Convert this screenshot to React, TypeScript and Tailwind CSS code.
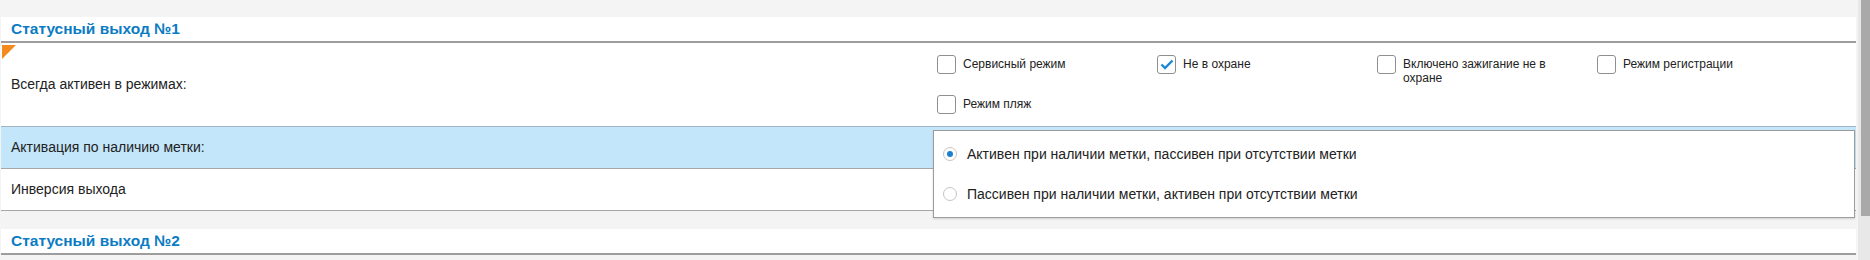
import { useState } from "react";

const MODES = [
  { id: "service", label: "Сервисный режим", checked: false },
  { id: "unguarded", label: "Не в охране", checked: true },
  { id: "ignition", label: "Включено зажигание не в охране", checked: false },
  { id: "registration", label: "Режим регистрации", checked: false },
  { id: "beach", label: "Режим пляж", checked: false },
];

const TAG_OPTIONS = [
  "Активен при наличии метки, пассивен при отсутствии метки",
  "Пассивен при наличии метки, активен при отсутствии метки",
];

function Checkbox({ checked }: { checked: boolean }) {
  return (
    <span className="flex h-[19px] w-[19px] shrink-0 items-center justify-center rounded-[3px] border border-[#8f8f8f] bg-white">
      {checked && (
        <svg width="14" height="11" viewBox="0 0 14 11">
          <path d="M1.5 5.5 L5 9 L12.5 1.5" fill="none" stroke="#1b87d6" strokeWidth="2.4" />
        </svg>
      )}
    </span>
  );
}

function Radio({ checked }: { checked: boolean }) {
  return (
    <span className="flex h-[14px] w-[14px] shrink-0 items-center justify-center rounded-full border border-[#c4c4c4] bg-white">
      {checked && <span className="h-[6px] w-[6px] rounded-full bg-[#1b7fd0]" />}
    </span>
  );
}

function SectionTitle({ children }: { children: string }) {
  return (
    <div className="flex h-[26px] items-center border-b-2 border-[#9d9d9d] pl-[10px] text-[15.5px] font-bold text-[#0b7cc3]">
      {children}
    </div>
  );
}

export default function App() {
  const [modes, setModes] = useState(MODES);
  const [tag, setTag] = useState(0);

  return (
    <div className="flex h-[260px] w-[1870px] overflow-hidden bg-[#f4f4f4] font-['Liberation_Sans',Arial,sans-serif] text-[14px] text-[#222]">
      <div className="relative flex-1 pl-px pr-[2px] pt-[17px]">
        <div className="bg-white">
          <SectionTitle>Статусный выход №1</SectionTitle>

          <div className="relative flex h-[84px] border-b border-[#9fb3c2]">
            <span className="absolute left-px top-[2px] h-0 w-0 border-r-[14px] border-t-[14px] border-r-transparent border-t-[#f28a1e]" />
            <div className="flex w-[929px] items-center pl-[10px]">Всегда активен в режимах:</div>
            <div className="grid flex-1 auto-rows-[40px] grid-cols-[220px_220px_220px_220px] content-start pl-[7px] pt-[12px]">
              {modes.map((m, i) => (
                <label
                  key={m.id}
                  className="flex cursor-pointer items-start gap-[7px]"
                  onClick={() =>
                    setModes((prev) =>
                      prev.map((p, j) => (j === i ? { ...p, checked: !p.checked } : p)),
                    )
                  }
                >
                  <Checkbox checked={m.checked} />
                  <span className="w-[150px] pt-[2px] text-[12px] leading-[14px]">{m.label}</span>
                </label>
              ))}
            </div>
          </div>

          <div className="flex h-[42px] items-center border-b border-[#a6a6a6] bg-[#c4e6fa] pl-[10px]">
            Активация по наличию метки:
          </div>
          <div className="flex h-[42px] items-center border-b border-[#a6a6a6] pl-[10px]">
            Инверсия выхода
          </div>
        </div>

        <div className="mt-[18px] bg-white">
          <SectionTitle>Статусный выход №2</SectionTitle>
        </div>

        <div className="absolute left-[933px] top-[130px] flex h-[88px] w-[922px] flex-col border border-[#9c9c9c] bg-white pl-[9px] pt-[3px] shadow-[0_1px_2px_rgba(0,0,0,0.15)]">
          {TAG_OPTIONS.map((o, i) => (
            <label key={o} className="flex h-[40px] cursor-pointer items-center gap-[10px]" onClick={() => setTag(i)}>
              <Radio checked={tag === i} />
              <span>{o}</span>
            </label>
          ))}
        </div>
      </div>

      <div className="flex w-[12px] flex-col bg-[#e8e8e8] pl-[3px]">
        <div className="h-[216px] w-[9px] bg-[#a9a9a9]" />
      </div>
    </div>
  );
}
